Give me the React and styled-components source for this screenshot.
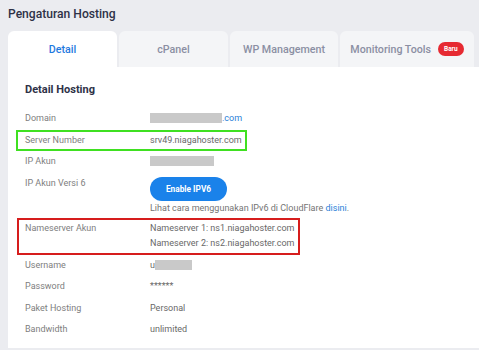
import React from 'react';
import styled, { createGlobalStyle } from 'styled-components';

const Global = createGlobalStyle`
  html, body {
    margin: 0;
    background: #ebecf0;
    font-family: Roboto, "Liberation Sans", sans-serif;
    overflow: hidden;
  }
`;

const Page = styled.div`
  padding: 5px 0 0 8px;
  height: 350px;
  box-sizing: border-box;
`;

const Title = styled.h1`
  margin: 0;
  font-size: 12.1px;
  line-height: 18px;
  font-weight: 500;
  color: #2e3247;
`;

const Tabs = styled.div`
  display: flex;
  gap: 2px;
  margin-top: 8px;
`;

const Tab = styled.div`
  flex: 0 0 ${p => p.w}px;
  height: 36px;
  display: flex;
  align-items: center;
  justify-content: center;
  gap: 7px;
  border-radius: 6px 6px 0 0;
  background: ${p => (p.active ? '#ffffff' : '#f4f5f7')};
  color: ${p => (p.active ? '#1f7ae0' : '#8b8fa3')};
  font-size: 10.7px;
  font-weight: 500;
  white-space: nowrap;
`;

const Badge = styled.span`
  background: #e62a32;
  color: #fff;
  font-size: 6.5px;
  font-weight: 700;
  padding: 3px 6px;
  border-radius: 8px;
  line-height: 8px;
`;

const Card = styled.div`
  background: #fff;
  padding: 15px 0 7px 17px;
`;

const Heading = styled.h2`
  margin: 0 0 10px;
  font-size: 11px;
  line-height: 16px;
  font-weight: 700;
  color: #2e3247;
`;

const Row = styled.div`
  display: grid;
  grid-template-columns: 125px 1fr;
  font-size: 9px;
  line-height: ${p => p.lh || 21.5}px;
  padding: ${p => p.pad || '0'};
  white-space: nowrap;
  ${p => p.box && `
    width: ${p.box.w}px;
    box-sizing: border-box;
    margin-left: -${p.box.indent}px;
    padding-left: ${p.box.indent}px;
    outline: 2px solid ${p.box.color};
    outline-offset: -2px;
  `}
`;

const Label = styled.div`
  color: #7e7e7e;
`;

const Value = styled.div`
  color: #686868;
`;

const Blur = styled.span`
  display: inline-block;
  width: ${p => p.w}px;
  height: 10px;
  background: #c9c9c9;
  vertical-align: -2px;
`;

const Link = styled.span`
  color: #2a7fd8;
`;

const Button = styled.button`
  display: block;
  margin-top: 4.25px;
  width: 77px;
  height: 24px;
  border: none;
  border-radius: 12px;
  background: #1a82ea;
  color: #fff;
  font-family: inherit;
  font-size: 8.3px;
  font-weight: 700;
`;

const Hint = styled.div`
  line-height: 14px;
  font-size: 9px;
  color: #747474;
`;

export default function App() {
  return (
    <Page>
      <Global />
      <Title>Pengaturan Hosting</Title>
      <Tabs>
        <Tab w={109} active>Detail</Tab>
        <Tab w={109}>cPanel</Tab>
        <Tab w={108}>WP Management</Tab>
        <Tab w={134}>Monitoring Tools <Badge>Baru</Badge></Tab>
      </Tabs>
      <Card>
        <Heading>Detail Hosting</Heading>
        <Row>
          <Label>Domain</Label>
          <Value><Blur w={72} /><Link>.com</Link></Value>
        </Row>
        <Row box={{ w: 231, indent: 9, color: '#3fe021' }}>
          <Label>Server Number</Label>
          <Value>srv49.niagahoster.com</Value>
        </Row>
        <Row>
          <Label>IP Akun</Label>
          <Value><Blur w={64} /></Value>
        </Row>
        <Row pad="0 0 3px">
          <Label>IP Akun Versi 6</Label>
          <Value>
            <Button>Enable IPV6</Button>
            <Hint>Lihat cara menggunakan IPv6 di CloudFlare <Link>disini</Link>.</Hint>
          </Value>
        </Row>
        <Row lh={15} pad="3.25px 0 3.75px" box={{ w: 283, indent: 8, color: '#d61d1d' }}>
          <Label>Nameserver Akun</Label>
          <Value>
            <div>Nameserver 1: ns1.niagahoster.com</div>
            <div>Nameserver 2: ns2.niagahoster.com</div>
          </Value>
        </Row>
        <Row>
          <Label>Username</Label>
          <Value>u<Blur w={37} /></Value>
        </Row>
        <Row>
          <Label>Password</Label>
          <Value>******</Value>
        </Row>
        <Row>
          <Label>Paket Hosting</Label>
          <Value>Personal</Value>
        </Row>
        <Row>
          <Label>Bandwidth</Label>
          <Value>unlimited</Value>
        </Row>
      </Card>
    </Page>
  );
}
